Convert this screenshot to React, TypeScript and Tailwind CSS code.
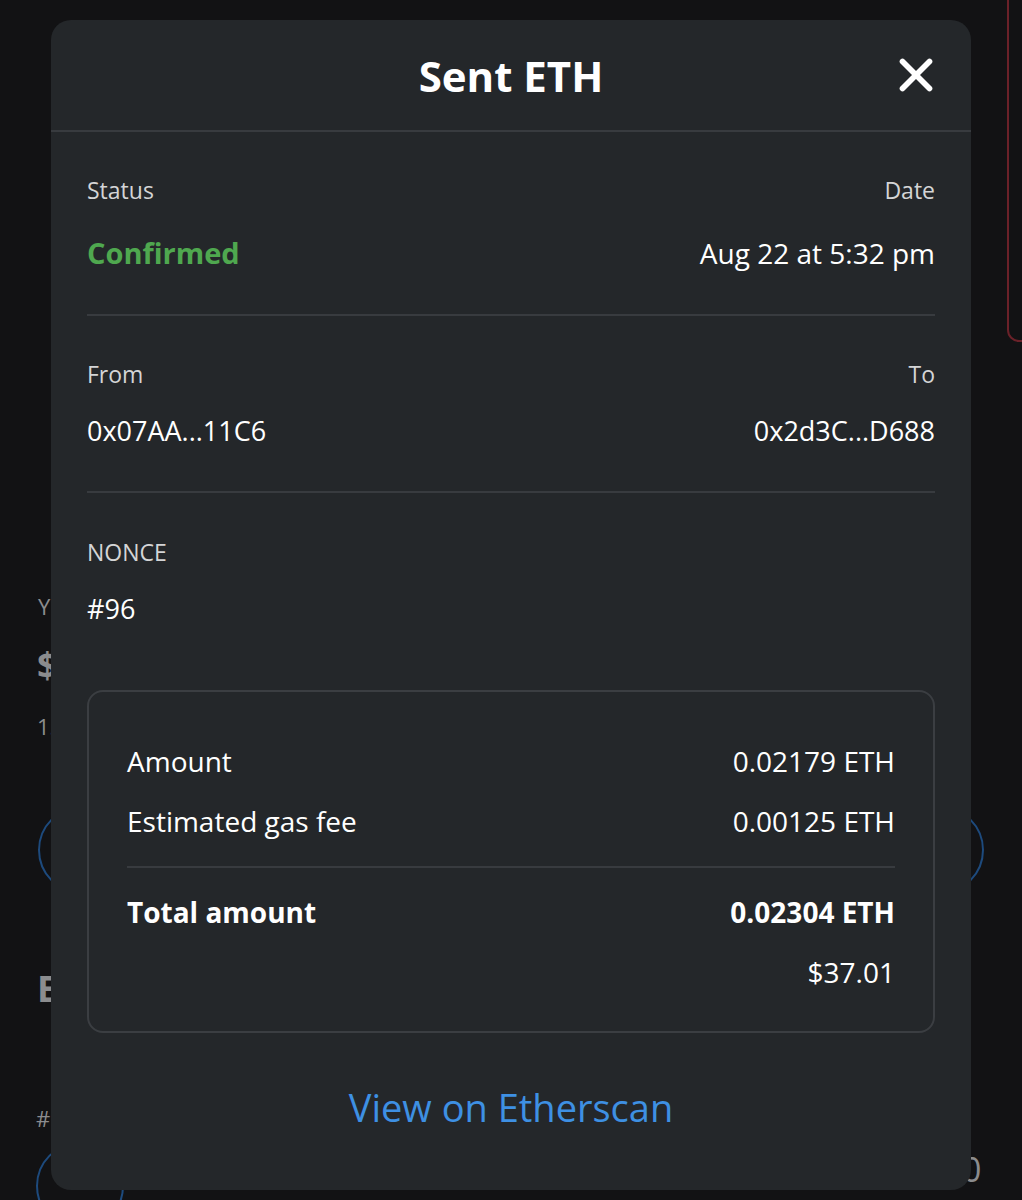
import { X } from "lucide-react";

const font = { fontFamily: '"Open Sans", "Liberation Sans", sans-serif' };

function Divider() {
  return <div className="h-[2px] bg-[#383b3f]" />;
}

function Backdrop() {
  // bits of the wallet page showing around the modal
  return (
    <div className="absolute inset-0 overflow-hidden text-[#8b8c8e]">
      <div className="absolute left-[1007px] top-[-20px] h-[362px] w-[60px] rounded-bl-[12px] border-2 border-[#6b2129]" />
      <div className="absolute left-[38px] top-[590px] text-[22px]">Y</div>
      <div className="absolute left-[37px] top-[638px] text-[36px] font-bold">$</div>
      <div className="absolute left-[37px] top-[710px] text-[22px]">1.</div>
      <div className="absolute left-[38px] top-[806px] h-[88px] w-[88px] rounded-full border-2 border-[#1d4a7d]" />
      <div className="absolute left-[896px] top-[806px] h-[88px] w-[88px] rounded-full border-2 border-[#1d4a7d]" />
      <div className="absolute left-[37px] top-[962px] text-[36px] font-bold">E</div>
      <div className="absolute left-[36px] top-[1102px] text-[22px]">#</div>
      <div className="absolute left-[36px] top-[1142px] h-[88px] w-[88px] rounded-full border-2 border-[#1d4a7d]" />
      <div className="absolute left-[962px] top-[1144px] text-[34px]">0</div>
    </div>
  );
}

function LabelRow({ left, right }: { left: string; right?: string }) {
  return (
    <div className="flex h-[30px] items-center justify-between text-[23px] text-[#d4d5d6]">
      <span>{left}</span>
      {right && <span>{right}</span>}
    </div>
  );
}

export default function App() {
  return (
    <div className="relative h-[1200px] w-full overflow-hidden bg-[#121214]" style={font}>
      <Backdrop />
      <div className="relative z-10 mx-[51px] mt-[20px] h-[1170px] w-[920px] rounded-[20px] bg-[#24272a] text-white">
        {/* Header */}
        <div className="grid h-[112px] grid-cols-[1fr_auto_1fr] items-center border-b-2 border-[#383b3f] px-[36px]">
          <div />
          <h1 className="text-[42px] font-bold">Sent ETH</h1>
          <div className="flex justify-end">
            <X size={54} strokeWidth={2.5} className="mr-[-8px] text-white" />
          </div>
        </div>

        <div className="px-[36px]">
          {/* Status / date */}
          <div className="pt-[43px]">
            <LabelRow left="Status" right="Date" />
            <div className="mt-[28px] flex h-[40px] items-center justify-between">
              <span className="text-[29px] font-bold text-[#4fa84f]">Confirmed</span>
              <span className="text-[28px]">Aug 22 at 5:32 pm</span>
            </div>
          </div>
          <div className="mt-[41px]">
            <Divider />
          </div>

          {/* From / to */}
          <div className="pt-[43px]">
            <LabelRow left="From" right="To" />
            <div className="mt-[22px] flex h-[40px] items-center justify-between text-[27px]">
              <span>0x07AA...11C6</span>
              <span>0x2d3C...D688</span>
            </div>
          </div>
          <div className="mt-[40px]">
            <Divider />
          </div>

          {/* Nonce */}
          <div className="pt-[44px]">
            <LabelRow left="NONCE" />
            <div className="mt-[22px] flex h-[40px] items-center text-[27px]">#96</div>
          </div>

          {/* Amount box */}
          <div className="mt-[61px] rounded-[16px] border-2 border-[#3b3e42] px-[38px] pt-[51px] pb-[41px] text-[28px]">
            <div className="flex h-[36px] items-center justify-between">
              <span>Amount</span>
              <span>0.02179 ETH</span>
            </div>
            <div className="mt-[24px] flex h-[36px] items-center justify-between">
              <span>Estimated gas fee</span>
              <span>0.00125 ETH</span>
            </div>
            <div className="mt-[27px]">
              <Divider />
            </div>
            <div className="mt-[26px] flex h-[36px] items-center justify-between font-bold">
              <span>Total amount</span>
              <span>0.02304 ETH</span>
            </div>
            <div className="mt-[24px] flex h-[36px] items-center justify-end">
              <span>$37.01</span>
            </div>
          </div>

          <div className="mt-[50px] flex h-[48px] items-center justify-center text-[38px] text-[#3e90e3]">
            View on Etherscan
          </div>
        </div>
      </div>
    </div>
  );
}
